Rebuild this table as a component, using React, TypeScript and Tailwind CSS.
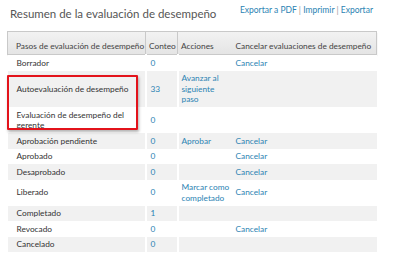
const ROWS = [
  { step: "Borrador", count: "0", action: "", cancel: "Cancelar" },
  { step: "Autoevaluación de desempeño", count: "33", action: "Avanzar al siguiente paso", cancel: "" },
  { step: "Evaluación de desempeño del gerente", count: "0", action: "", cancel: "" },
  { step: "Aprobación pendiente", count: "0", action: "Aprobar", cancel: "Cancelar" },
  { step: "Aprobado", count: "0", action: "", cancel: "Cancelar" },
  { step: "Desaprobado", count: "0", action: "", cancel: "Cancelar" },
  { step: "Liberado", count: "0", action: "Marcar como completado", cancel: "Cancelar" },
  { step: "Completado", count: "1", action: "", cancel: "" },
  { step: "Revocado", count: "0", action: "", cancel: "Cancelar" },
  { step: "Cancelado", count: "0", action: "", cancel: "" },
];

export default function App() {
  return (
    <div className="relative h-[273px] w-[400px] bg-white font-['Lato',sans-serif] text-[#333]">
      <div className="flex items-start justify-between pl-[10px] pr-[27px] pt-[4px]">
        <h1 className="mt-[2px] whitespace-nowrap text-[11.5px] leading-[16px] text-[#555]">Resumen de la evaluación de desempeño</h1>
        <div className="whitespace-nowrap text-[8.5px] leading-[12px] text-[#2b83b3]">
          Exportar a PDF <span className="text-[#999]">|</span> Imprimir <span className="text-[#999]">|</span> Exportar
        </div>
      </div>

      <table className="ml-[7px] mt-[9px] w-[370px] table-fixed border-collapse text-[8.3px] leading-[10.5px]">
        <colgroup>
          <col className="w-[138px]" />
          <col className="w-[32px]" />
          <col className="w-[56px]" />
          <col />
        </colgroup>
        <thead>
          <tr className="h-[23px] bg-gradient-to-b from-[#f2f2f2] to-[#e4e4e4] text-[#444] shadow-[0_1px_1px_rgba(0,0,0,0.2)]">
            <th className="whitespace-nowrap border border-[#c9c9c9] px-[8px] pb-[3px] text-left align-bottom font-normal">Pasos de evaluación de desempeño</th>
            <th className="whitespace-nowrap border border-[#c9c9c9] px-[3px] pb-[3px] text-left align-bottom font-normal">Conteo</th>
            <th className="whitespace-nowrap border-y border-l border-[#c9c9c9] px-[3px] pb-[3px] text-left align-bottom font-normal">Acciones</th>
            <th className="whitespace-nowrap border-y border-r border-[#c9c9c9] px-[2px] pb-[3px] text-left align-bottom font-normal">Cancelar evaluaciones de desempeño</th>
          </tr>
        </thead>
        <tbody>
          {ROWS.map((r, i) => (
            <tr key={r.step} className={i % 2 === 1 ? "bg-[#f1f1f1]" : "bg-white"}>
              <td className="border-r-2 border-white py-[2.5px] pl-[9px] pr-[4px] align-middle">{r.step}</td>
              <td className="border-r-2 border-white px-[4px] py-[2.5px] align-middle text-[#2b83b3]">{r.count}</td>
              <td className="px-[3px] py-[2.5px] align-middle text-[#2b83b3]">{r.action}</td>
              <td className="px-[2px] py-[2.5px] align-middle text-[#2b83b3]">{r.cancel}</td>
            </tr>
          ))}
        </tbody>
      </table>

      <div className="pointer-events-none absolute left-[7px] top-[75px] h-[55px] w-[131px] rounded-[1px] border-2 border-[#e3131b] shadow-[1px_2px_3px_rgba(0,0,0,0.3)]" />
    </div>
  );
}
